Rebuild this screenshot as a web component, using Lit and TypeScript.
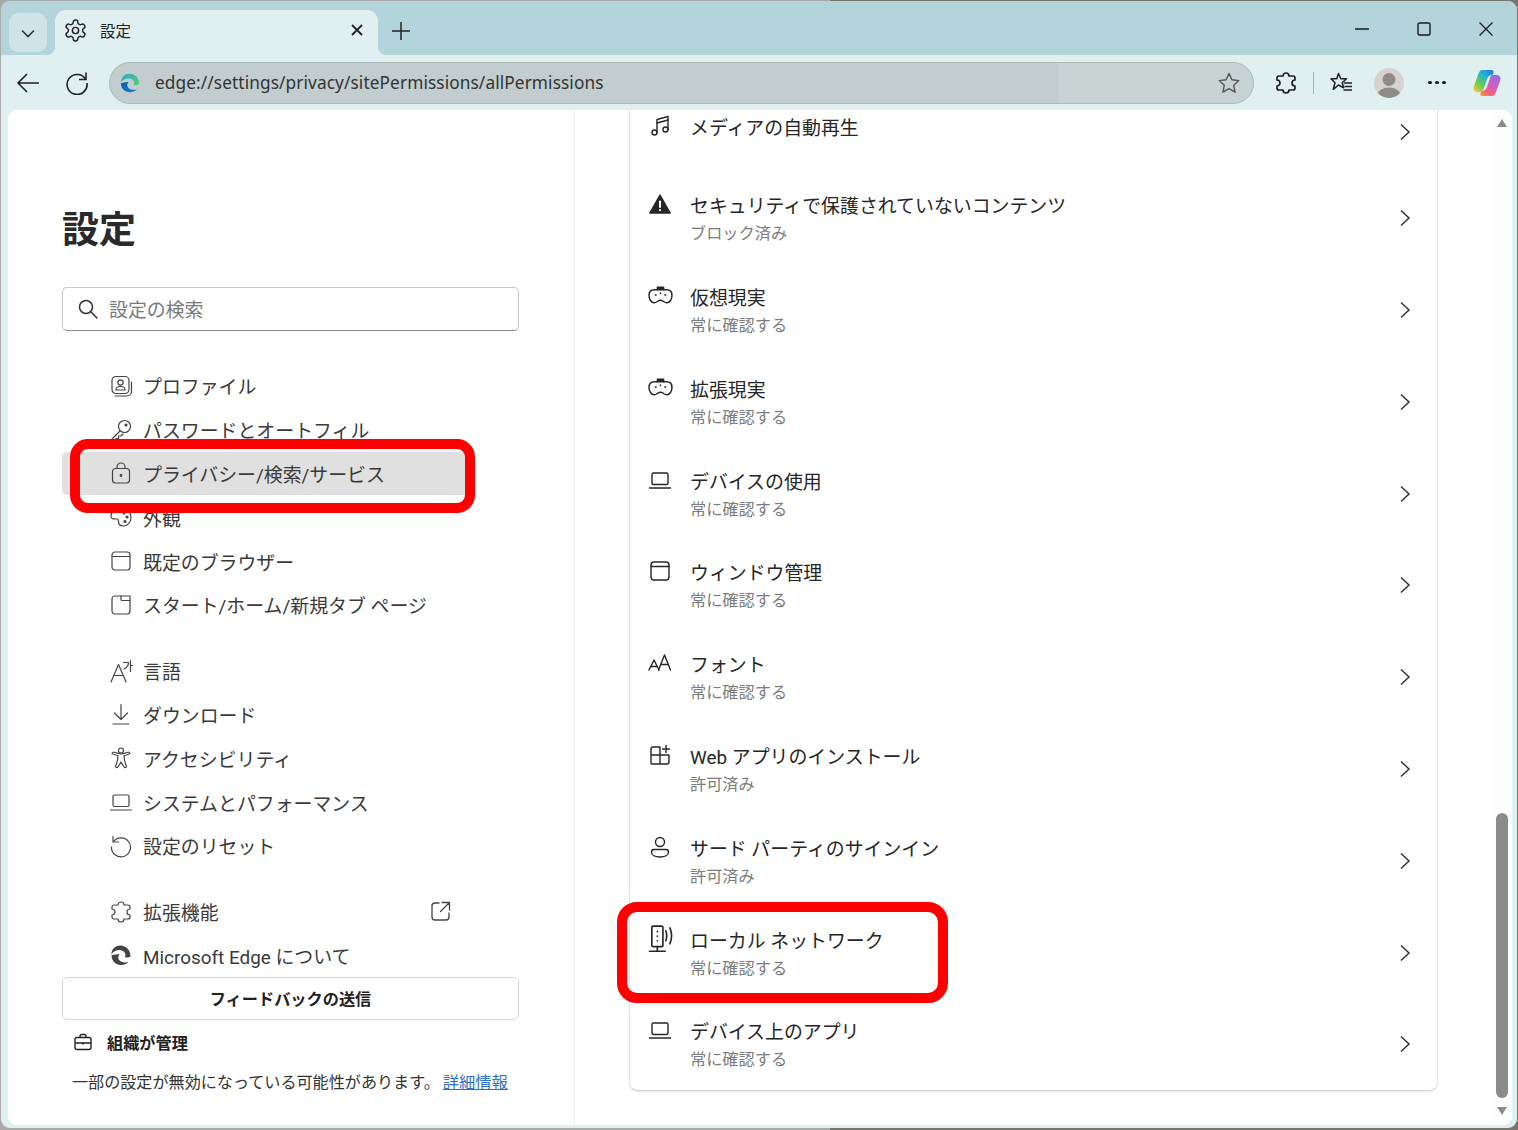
import { LitElement, html, css, svg } from 'lit';
import { customElement } from 'lit/decorators.js';

const icon = (body: unknown, size = 20, sw = 1.5) => html`<svg
  width=${size}
  height=${size}
  viewBox="0 0 24 24"
  fill="none"
  stroke="currentColor"
  stroke-width=${sw}
  stroke-linecap="round"
  stroke-linejoin="round"
>${body}</svg>`;

const gear = svg`<path d="M12.22 2h-.44a2 2 0 0 0-2 2v.18a2 2 0 0 1-1 1.73l-.43.25a2 2 0 0 1-2 0l-.15-.08a2 2 0 0 0-2.73.73l-.22.38a2 2 0 0 0 .73 2.73l.15.1a2 2 0 0 1 1 1.72v.51a2 2 0 0 1-1 1.74l-.15.09a2 2 0 0 0-.73 2.73l.22.38a2 2 0 0 0 2.73.73l.15-.08a2 2 0 0 1 2 0l.43.25a2 2 0 0 1 1 1.73V20a2 2 0 0 0 2 2h.44a2 2 0 0 0 2-2v-.18a2 2 0 0 1 1-1.73l.43-.25a2 2 0 0 1 2 0l.15.08a2 2 0 0 0 2.73-.73l.22-.39a2 2 0 0 0-.73-2.73l-.15-.08a2 2 0 0 1-1-1.74v-.5a2 2 0 0 1 1-1.74l.15-.09a2 2 0 0 0 .73-2.73l-.22-.38a2 2 0 0 0-2.73-.73l-.15.08a2 2 0 0 1-2 0l-.43-.25a2 2 0 0 1-1-1.73V4a2 2 0 0 0-2-2z"/><circle cx="12" cy="12" r="3"/>`;

const puzzle = svg`<path d="M9 5a3 3 0 0 1 6 0h4a2 2 0 0 1 2 2v2a3 3 0 0 0 0 6v2a2 2 0 0 1-2 2h-4a3 3 0 0 1-6 0H5a2 2 0 0 1-2-2v-2a3 3 0 0 0 0-6V7a2 2 0 0 1 2-2z"/>`;

const laptop = svg`<rect x="4" y="5" width="16" height="11.5" rx="1.5"/><path d="M1.5 20h21"/>`;
const win = svg`<rect x="3" y="3" width="18" height="18" rx="3"/><path d="M3 7.5h18"/>`;
const headset = svg`<path d="M6 6.500h12c3 0 5 2 5 5.500s-2 7-5 7c-2.500 0-3.500-2.500-6-2.500s-3.500 2.500-6 2.500c-3 0-5-3.500-5-7s2-5.500 5-5.500z"/><path d="M9 6.500V4h6v2.500" fill="currentColor"/><path d="M7 11.500h.8M16.200 11.500h.8M12 9.500v.6"/>`;
const edgeMono = svg`<path d="M21.5 13.200c0-5.600-4.200-10.700-10-10.700C6 2.500 2.300 6.700 2.500 11.500 4 8.600 7 7 10 7c4 0 6.500 2.500 6.500 5 0 1-.5 1.700-1 2.100 2.500 1 6-.1 6-.9z" fill="currentColor" stroke="none"/><path d="M2.500 12.500c0 5 4 9.500 9.500 9.500 3 0 5.500-1 7.500-3.200-3 1.200-7.500.7-9.500-2-1.200-1.600-1-3.800.5-5.300-3-.6-6.500.5-8 1z" fill="currentColor" stroke="none"/>`;

type NavItem = { label: string; ic: unknown; active?: boolean; ext?: boolean };

const navGroups: NavItem[][] = [
  [
    { label: 'プロファイル', ic: svg`<rect x="3" y="2.500" width="17" height="17" rx="4"/><circle cx="11.500" cy="8.500" r="2.600"/><path d="M7 15.500c0-2 2-3 4.500-3s4.500 1 4.500 3v.5H7z"/><path d="M6 22h12c2.500 0 4.500-2 4.500-4.500V8"/>` },
    { label: 'パスワードとオートフィル', ic: svg`<circle cx="15.500" cy="8.500" r="6"/><circle cx="17" cy="7" r="1" fill="currentColor"/><path d="M11 13l-8 8v1.500h4v-2h2.500v-2.500H12l2-2"/>` },
    { label: 'プライバシー/検索/サービス', active: true, ic: svg`<rect x="3.500" y="7.500" width="17" height="14.500" rx="3"/><path d="M8 7.500V6a4 4 0 0 1 8 0v1.500"/><circle cx="12" cy="14.500" r=".8" fill="currentColor"/>` },
    { label: '外観', ic: svg`<path d="M12 3C6.500 3 2 6.500 2 11c0 2.500 2 3 4 2.800 2-.2 3.500.4 3.500 2.500 0 2.700 1.500 4.700 4.500 4.700 4.500 0 8-3.500 8-8.500S17.500 3 12 3z"/><circle cx="15" cy="8" r="1" fill="currentColor"/><circle cx="18" cy="12" r="1" fill="currentColor"/><circle cx="16" cy="16.500" r="1" fill="currentColor"/>` },
    { label: '既定のブラウザー', ic: win },
    { label: 'スタート/ホーム/新規タブ ページ', ic: svg`<path d="M6 3h15v15a3 3 0 0 1-3 3H6a3 3 0 0 1-3-3V6a3 3 0 0 1 3-3z"/><path d="M12 3v3.500a1 1 0 0 0 1 1h8"/>` },
  ],
  [
    { label: '言語', ic: svg`<path d="M2 23L9.500 5.500 17 23M5 16.500h9"/><path d="M14.500 3.500h5c0 3-1.500 5-4.500 6.500M21.500 1.500v11M21.500 6.500h2"/>` },
    { label: 'ダウンロード', ic: svg`<path d="M12 2.500v15M5.500 11l6.500 6.500 6.500-6.500M4 22h16"/>` },
    { label: 'アクセシビリティ', ic: svg`<circle cx="12" cy="4.500" r="2.500"/><path d="M3 7.500c3 1.500 5 2 6 2 0 3.500-.5 6-2.500 11 .5 1.500 2 1.500 2.500.5l3-5 3 5c.5 1 2 1 2.500-.5-2-5-2.500-7.500-2.500-11 1 0 3-.5 6-2-.8-1.500-2-1.500-2.500-1.200-3 1.200-4.500 1.500-6.500 1.500s-3.500-.3-6.500-1.500C5 6 3.800 6 3 7.500z"/>` },
    { label: 'システムとパフォーマンス', ic: laptop },
    { label: '設定のリセット', ic: svg`<path d="M4.500 7.500A9.500 9.500 0 1 1 2.500 13"/><path d="M4 2.500v5.500h5.500"/>` },
  ],
  [
    { label: '拡張機能', ic: puzzle, ext: true },
    { label: 'Microsoft Edge について', ic: edgeMono },
  ],
];

type Perm = { title: string; sub?: string; ic: unknown; size?: number; outlined?: boolean };

const perms: Perm[] = [
  { title: 'メディアの自動再生', ic: svg`<path d="M9 18.500V5.500L20 2.500v13"/><path d="M9 9l11-3"/><circle cx="6.500" cy="18.500" r="2.500"/><circle cx="17.500" cy="15.500" r="2.500"/>` },
  { title: 'セキュリティで保護されていないコンテンツ', sub: 'ブロック済み', ic: svg`<path d="M12 3L1.800 21h20.400z" fill="currentColor"/><path d="M12 9.500v5.500M12 18v.2" stroke="#fff" stroke-width="2"/>` },
  { title: '仮想現実', sub: '常に確認する', ic: headset, size: 25 },
  { title: '拡張現実', sub: '常に確認する', ic: headset, size: 25 },
  { title: 'デバイスの使用', sub: '常に確認する', ic: laptop },
  { title: 'ウィンドウ管理', sub: '常に確認する', ic: win },
  { title: 'フォント', sub: '常に確認する', ic: svg`<path d="M1 19l5-10 5 10M3 15.500h6"/><path d="M10.500 19L16.500 4l6 15M13 13.500h7"/>` },
  { title: 'Web アプリのインストール', sub: '許可済み', ic: svg`<path d="M12 4H5a2 2 0 0 0-2 2v14a1 1 0 0 0 1 1h15a2 2 0 0 0 2-2v-7H3M12 4v17"/><path d="M18 2.500v7M14.500 6h7"/>` },
  { title: 'サード パーティのサインイン', sub: '許可済み', ic: svg`<circle cx="12" cy="7" r="4.500"/><path d="M3.500 17c0-1.500 1-2.500 2.500-2.500h12c1.500 0 2.500 1 2.500 2.500 0 3-3.500 5-8.500 5s-8.500-2-8.500-5z"/>` },
  { title: 'ローカル ネットワーク', sub: '常に確認する', outlined: true, size: 28, ic: svg`<rect x="5" y="1" width="9.500" height="17.500" rx="1"/><path d="M9.700 18.500v3.500M3 22.500h13.500M9.700 5.500v.2M9.700 9.500v.2M9.700 13.500v.2"/><path d="M17 5c.9 2.500.9 6 0 8.500M20.500 2.500c1.700 4 1.700 9.500 0 13.500"/>` },
  { title: 'デバイス上のアプリ', sub: '常に確認する', ic: laptop },
];

const chevron = html`<svg class="chev" width="12" height="18" viewBox="0 0 12 18" fill="none" stroke="currentColor" stroke-width="1.500"><path d="M2 1.500L10 9l-8 7.500"/></svg>`;

@customElement('app-root')
export class AppRoot extends LitElement {
  static styles = css`
    :host {
      display: block;
      width: 1518px;
      height: 1130px;
      overflow: hidden;
      background: linear-gradient(90deg, #a9aaa8 830px, #77746a 830px);
      font-family: 'Roboto', 'Noto Sans CJK JP', sans-serif;
      color: #1f1f1f;
    }
    svg {
      display: block;
      flex: none;
    }

    .window {
      margin: 1px 1px 0 1px;
      height: 1127px;
      border-radius: 9px;
      overflow: hidden;
      background: #e0eff0;
      display: flex;
      flex-direction: column;
    }

    .strip {
      height: 54px;
      flex: none;
      background: #b3d4da;
      display: flex;
      align-items: flex-end;
      padding-left: 8px;
    }
    .tab-menu {
      width: 38px;
      height: 39px;
      margin-bottom: 3px;
      border-radius: 9px;
      background: #cfe3e8;
      display: flex;
      align-items: center;
      justify-content: center;
      color: #333;
    }
    .tab {
      position: relative;
      width: 323px;
      height: 45px;
      margin-left: 8px;
      border-radius: 11px 11px 0 0;
      background: #e0eff0;
      display: flex;
      align-items: center;
      padding: 0 14px 5px 8px;
      box-sizing: border-box;
      font-size: 15.500px;
      color: #222;
    }
    .tab::before,
    .tab::after {
      content: '';
      position: absolute;
      bottom: 0;
      width: 9px;
      height: 9px;
    }
    .tab::before {
      left: -9px;
      background: radial-gradient(circle at 0 0, transparent 9px, #e0eff0 9.500px);
    }
    .tab::after {
      right: -9px;
      background: radial-gradient(circle at 100% 0, transparent 9px, #e0eff0 9.500px);
    }
    .tab-title {
      margin-left: 12px;
      flex: 1;
    }
    .plus {
      width: 38px;
      height: 45px;
      margin-left: 4px;
      padding-bottom: 4px;
      box-sizing: border-box;
      display: flex;
      align-items: center;
      justify-content: center;
      color: #222;
    }
    .spacer {
      flex: 1;
    }
    .winctl {
      width: 62px;
      align-self: flex-start;
      height: 56px;
      display: flex;
      align-items: center;
      justify-content: center;
      color: #1a1a1a;
    }

    .toolbar {
      height: 55px;
      flex: none;
      display: flex;
      align-items: center;
      padding-left: 8px;
    }
    .tool {
      width: 38px;
      height: 38px;
      flex: none;
      display: flex;
      align-items: center;
      justify-content: center;
      color: #222;
    }
    .refresh {
      margin-left: 11px;
    }
    .urlbar {
      margin-left: 13px;
      width: 1145px;
      height: 42px;
      box-sizing: border-box;
      border: 1px solid #a9b9bb;
      border-radius: 21px;
      background: linear-gradient(90deg, #c1cdce 948px, #c7d2d3 948px);
      display: flex;
      align-items: center;
      padding: 0 12px 0 10px;
      color: #333;
      font-family: 'Noto Sans', sans-serif;
      font-size: 17.250px;
    }
    .url-text {
      margin-left: 15px;
      flex: 1;
      letter-spacing: 0.1px;
    }
    .star {
      color: #555;
    }
    .ext {
      margin-left: 13px;
    }
    .vsep {
      width: 1px;
      height: 22px;
      margin: 0 8px;
      background: #a8b6b8;
      flex: none;
    }
    .avatar-tool {
      margin-left: 10px;
    }
    .avatar {
      width: 30px;
      height: 30px;
      border-radius: 50%;
      overflow: hidden;
      background: #d5d2cf;
    }
    .dots {
      margin-left: 10px;
      gap: 3.500px;
    }
    .dots i {
      width: 3.500px;
      height: 3.500px;
      border-radius: 50%;
      background: #222;
    }
    .copilot {
      margin-left: 12px;
    }

    .content {
      flex: none;
      height: 1015px;
      margin: 0 5px 0 7px;
      border-radius: 9px;
      overflow: hidden;
      background: #fff;
      display: flex;
    }

    .side {
      width: 567px;
      flex: none;
      box-sizing: border-box;
      border-right: 1px solid #ececec;
      padding: 96px 55px 0 54px;
    }
    h1 {
      margin: 0;
      font-size: 37px;
      line-height: 50px;
      font-weight: 700;
      color: #2a2a2a;
    }
    .search {
      margin-top: 31px;
      height: 44px;
      box-sizing: border-box;
      border: 1px solid #c8c8c8;
      border-bottom-color: #8a8a8a;
      border-radius: 5px;
      display: flex;
      align-items: center;
      gap: 10px;
      padding: 0 0 1px 14px;
      font-size: 18.900px;
      color: #7a7a7a;
    }
    .search svg {
      color: #333;
    }
    nav {
      margin-top: 33px;
      height: 613px;
      overflow: hidden;
      display: flex;
      flex-direction: column;
      gap: 22px;
    }
    .nav-item {
      position: relative;
      height: 43.800px;
      box-sizing: border-box;
      display: flex;
      align-items: center;
      gap: 10px;
      padding-left: 47px;
      font-size: 18.900px;
      color: #3a3a3a;
      border-radius: 5px;
    }
    .nav-item svg {
      color: #444;
    }
    .nav-item.active {
      width: 408px;
      background: #e0e0e0;
      z-index: 1;
    }
    .nav-item .link-out {
      position: absolute;
      left: 369px;
      top: 11px;
      color: #666;
    }
    .nav-highlight {
      position: absolute;
      left: 8px;
      top: -13px;
      width: 405px;
      height: 74px;
      box-sizing: border-box;
      border: 10px solid #fe0000;
      border-radius: 18px;
    }
    .feedback {
      height: 43px;
      box-sizing: border-box;
      border: 1px solid #d6d6d6;
      border-radius: 5px;
      display: flex;
      align-items: center;
      justify-content: center;
      padding-bottom: 1px;
      font-size: 16.200px;
      font-weight: 700;
      color: #222;
    }
    .managed {
      margin-top: 8px;
      height: 28px;
      display: flex;
      align-items: center;
      gap: 15px;
      padding-left: 12px;
      font-size: 16.200px;
      font-weight: 700;
      color: #222;
    }
    .note {
      margin-top: 13px;
      margin-left: 10px;
      white-space: nowrap;
      font-size: 16.100px;
      line-height: 28px;
      color: #333;
    }
    .note a {
      color: #2f6fd0;
      text-decoration: underline;
      margin-left: 3px;
      font-size: 16.300px;
    }

    .main {
      flex: 1;
      overflow: hidden;
      padding-left: 54px;
    }
    .card {
      width: 809px;
      box-sizing: border-box;
      margin-top: -30.500px;
      background: #fff;
      border: 1px solid #e4e4e4;
      border-bottom-color: #d4d4d4;
      border-radius: 9px;
      box-shadow: 0 1px 2px rgba(0, 0, 0, 0.1);
    }
    .row {
      position: relative;
      height: 91.800px;
      box-sizing: border-box;
      display: grid;
      grid-template-columns: 60px 1fr 30px 17px;
      grid-template-rows: 28px 28px;
      align-content: center;
      align-items: center;
    }
    .row.single {
      grid-template-rows: 28px;
    }
    .row svg.pic {
      justify-self: center;
      color: #262626;
      grid-column: 1;
      grid-row: 1;
    }
    .title {
      grid-column: 2;
      grid-row: 1;
      padding-top: 5px;
      font-size: 18.900px;
      line-height: 23px;
      color: #262626;
      white-space: nowrap;
    }
    .single .title {
      padding-top: 6px;
      line-height: 22px;
    }
    .sub {
      grid-column: 2;
      grid-row: 2;
      padding-top: 4px;
      font-size: 16.200px;
      line-height: 24px;
      color: #7c7c7c;
    }
    .chev {
      grid-column: 3;
      grid-row: 1 / 3;
      justify-self: center;
      color: #333;
    }
    .row.single .chev {
      grid-row: 1;
      margin-top: 11px;
    }
    .row-highlight {
      position: absolute;
      left: -13px;
      top: -5px;
      width: 331px;
      height: 101px;
      box-sizing: border-box;
      border: 10px solid #fe0000;
      border-radius: 20px;
    }

    .scroll {
      width: 18px;
      flex: none;
      box-sizing: border-box;
      background: #fdfdfd;
      display: flex;
      flex-direction: column;
      align-items: center;
      padding: 9px 2px 10px 0;
    }
    .arrow-up,
    .arrow-down {
      width: 0;
      height: 0;
      border-left: 5px solid transparent;
      border-right: 5px solid transparent;
    }
    .arrow-up {
      border-bottom: 8px solid #8c8c8c;
    }
    .arrow-down {
      border-top: 8px solid #8c8c8c;
      margin-top: 9px;
    }
    .thumb {
      width: 12px;
      height: 285px;
      margin-top: auto;
      border-radius: 6px;
      background: #8b8b8b;
    }
  `;

  render() {
    return html`
      <div class="window">
        <div class="strip">
          <div class="tab-menu">
            <svg width="18" height="18" viewBox="0 0 18 18" fill="none" stroke="currentColor" stroke-width="1.600"><path d="M3 6.500l6 6 6-6" /></svg>
          </div>
          <div class="tab">
            ${icon(gear, 25, 1.4)}
            <span class="tab-title">設定</span>
            <svg width="14" height="14" viewBox="0 0 14 14" fill="none" stroke="currentColor" stroke-width="1.800"><path d="M2 2l10 10M12 2L2 12" /></svg>
          </div>
          <div class="plus">
            <svg width="20" height="20" viewBox="0 0 20 20" fill="none" stroke="currentColor" stroke-width="1.500"><path d="M10 1v18M1 10h18" /></svg>
          </div>
          <div class="spacer"></div>
          <div class="winctl">
            <svg width="14" height="14" viewBox="0 0 14 14" stroke="currentColor" stroke-width="1.300"><path d="M0 7h14" /></svg>
          </div>
          <div class="winctl">
            <svg width="14" height="14" viewBox="0 0 14 14" fill="none" stroke="currentColor" stroke-width="1.400"><rect x="1" y="1" width="12" height="12" rx="1.500" /></svg>
          </div>
          <div class="winctl">
            <svg width="14" height="14" viewBox="0 0 14 14" stroke="currentColor" stroke-width="1.300"><path d="M0.500 0.500l13 13M13.500 0.500l-13 13" /></svg>
          </div>
        </div>

        <div class="toolbar">
          <div class="tool">
            <svg width="24" height="22" viewBox="0 0 24 22" fill="none" stroke="currentColor" stroke-width="1.600"><path d="M2 11h21M11 2l-9 9 9 9" /></svg>
          </div>
          <div class="tool refresh">
            <svg width="24" height="24" viewBox="0 0 24 24" fill="none" stroke="currentColor" stroke-width="1.600"><path d="M20.500 8A10 10 0 1 0 22 12" /><path d="M21 1.500V8.500h-7" /></svg>
          </div>
          <div class="urlbar">
            <svg width="20" height="20" viewBox="0 0 24 24">
              <defs>
                <linearGradient id="eg" x1="0" y1="0" x2="1" y2="1"><stop offset="0" stop-color="#2aa7c9" /><stop offset="1" stop-color="#54d36a" /></linearGradient>
                <linearGradient id="eb" x1="0" y1="0" x2="1" y2="1"><stop offset="0" stop-color="#0b5fa8" /><stop offset="1" stop-color="#0f82d4" /></linearGradient>
              </defs>
              <path d="M23 13C23 6 18 1 11.500 1 6 1 1.500 5 1 11c2-3 5.500-4.500 9-4.500 4.500 0 7 2.500 7 5.500 0 1-.5 2-1 2.500 3 1 7-.5 7-1.500z" fill="url(#eg)" />
              <path d="M1 12.500C1 18.500 6 23 12 23c3 0 6-1 8.500-3.500-4 1.500-9 .5-11-2.500-1.300-2-1-4.500 1-6-3.500-.7-7.500.8-9.500 1.500z" fill="url(#eb)" />
            </svg>
            <span class="url-text">edge://settings/privacy/sitePermissions/allPermissions</span>
            <span class="star">
              <svg width="24" height="24" viewBox="0 0 24 24" fill="none" stroke="currentColor" stroke-width="1.400" stroke-linejoin="round"><path d="M12 2.500l2.900 6.300 6.900.8-5.100 4.700 1.400 6.800-6.100-3.400-6.100 3.400 1.400-6.800L2.200 9.600l6.900-.8z" /></svg>
            </span>
          </div>
          <div class="tool ext">${icon(puzzle, 24, 1.7)}</div>
          <div class="vsep"></div>
          <div class="tool">
            <svg width="24" height="24" viewBox="0 0 24 24" fill="none" stroke="currentColor" stroke-width="1.500" stroke-linejoin="round"><path d="M9.500 2.500l2.300 5.300h5.700l-4.300 4 1.500 5-5.200-2.800-5.200 4.300 1.700-6.500-4-4h5.700z" /><path d="M15 12h8M15.500 15.500h7.500M14.500 19h8.500" /></svg>
          </div>
          <div class="tool avatar-tool">
            <div class="avatar">
              <svg width="30" height="30" viewBox="0 0 30 30" fill="#8f8b88"><circle cx="15" cy="11.500" r="6.500" /><ellipse cx="15" cy="26" rx="11" ry="6.500" /></svg>
            </div>
          </div>
          <div class="tool dots"><i></i><i></i><i></i></div>
          <div class="tool copilot">
            <svg width="30" height="30" viewBox="0 0 30 30">
              <defs>
                <linearGradient id="c1" x1="0.900" y1="0" x2="0.100" y2="1"><stop offset="0" stop-color="#1f7fe8" /><stop offset=".35" stop-color="#22b5d0" /><stop offset=".65" stop-color="#5ecb5a" /><stop offset="1" stop-color="#f5c62f" /></linearGradient>
                <linearGradient id="c2" x1="0.800" y1="0" x2="0.200" y2="1"><stop offset="0" stop-color="#8f6ee8" /><stop offset=".5" stop-color="#d65cc0" /><stop offset=".8" stop-color="#f2607a" /><stop offset="1" stop-color="#f98a34" /></linearGradient>
              </defs>
              <path d="M10 2h9c3 0 3 2 2 4l-1 1c-3 0-4 2-5 4l-3 9c-1 3-3 4-5 4H5c-3 0-4-3-3-6l4-11c1-3 2-5 4-5z" fill="url(#c1)" />
              <path d="M20 7h5c3 0 4 3 3 6l-4 11c-1 3-2.500 4-5 4h-8c-3 0-3-2-2-4l1-1c3 0 4-2 5-4l3-9c.5-1.500 1-3 2-3z" fill="url(#c2)" />
            </svg>
          </div>
        </div>

        <div class="content">
          <aside class="side">
            <h1>設定</h1>
            <div class="search">
              <svg width="22" height="22" viewBox="0 0 22 22" fill="none" stroke="currentColor" stroke-width="1.500" stroke-linecap="round"><circle cx="9" cy="9" r="6.500" /><path d="M14 14l6 6" /></svg>
              設定の検索
            </div>
            <nav>
              ${navGroups.map(
                group => html`<div>
                  ${group.map(
                    item => html`<div class="nav-item ${item.active ? 'active' : ''}">
                      ${icon(item.ic, 24, 1.2)}
                      <span>${item.label}</span>
                      ${item.ext
                        ? html`<span class="link-out">
                            <svg width="20" height="20" viewBox="0 0 20 20" fill="none" stroke="currentColor" stroke-width="1.300" stroke-linecap="round"><path d="M8 2H4a3 3 0 0 0-3 3v11a3 3 0 0 0 3 3h11a3 3 0 0 0 3-3v-4" /><path d="M11 1.500h7.500V9M18.500 1.500l-9 9" /></svg>
                          </span>`
                        : ''}
                      ${item.active ? html`<div class="nav-highlight"></div>` : ''}
                    </div>`
                  )}
                </div>`
              )}
            </nav>
            <div class="feedback">フィードバックの送信</div>
            <div class="managed">
              <svg width="18" height="18" viewBox="0 0 18 18" fill="none" stroke="currentColor" stroke-width="1.400"><rect x="1" y="4.500" width="16" height="12" rx="2" /><path d="M6 4.500V3a1.500 1.500 0 0 1 1.500-1.500h3A1.500 1.500 0 0 1 12 3v1.500M1 10h16M9 9v2.500" /></svg>
              組織が管理
            </div>
            <div class="note">一部の設定が無効になっている可能性があります。<a>詳細情報</a></div>
          </aside>

          <section class="main">
            <div class="card">
              ${perms.map(
                p => html`<div class="row ${p.sub ? '' : 'single'}">
                  ${this.pic(p.ic, p.size ?? 24)}
                  <div class="title">${p.title}</div>
                  ${p.sub ? html`<div class="sub">${p.sub}</div>` : ''}
                  ${chevron}
                  ${p.outlined ? html`<div class="row-highlight"></div>` : ''}
                </div>`
              )}
            </div>
          </section>

          <div class="scroll">
            <div class="arrow-up"></div>
            <div class="thumb"></div>
            <div class="arrow-down"></div>
          </div>
        </div>
      </div>
    `;
  }

  private pic(body: unknown, size: number) {
    return html`<svg class="pic" width=${size} height=${size} viewBox="0 0 24 24" fill="none" stroke="currentColor" stroke-width="1.400" stroke-linecap="round" stroke-linejoin="round">${body}</svg>`;
  }
}

declare global {
  interface HTMLElementTagNameMap {
    'app-root': AppRoot;
  }
}
